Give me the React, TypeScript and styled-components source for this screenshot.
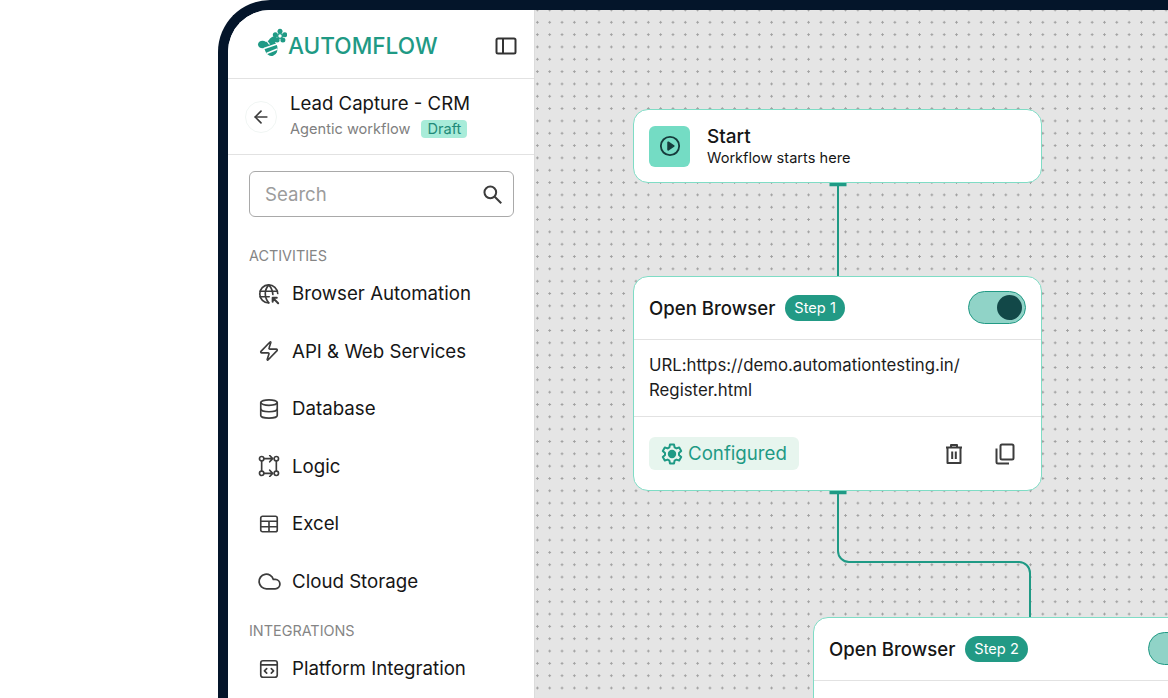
import { ReactNode } from "react"
import styled, { createGlobalStyle } from "styled-components"
import { ArrowLeft, Cloud, Database, Zap } from "lucide-react"

const GlobalStyle = createGlobalStyle`
  html, body {
    margin: 0;
    padding: 0;
    background: #fff;
    overflow: hidden;
  }
  * { box-sizing: border-box; }
  body {
    font-family: Inter, "Noto Sans", sans-serif;
    font-optical-sizing: none;
    color: #161616;
  }
`

const Page = styled.div`
  width: 1168px;
  height: 698px;
  padding-left: 218px;
  overflow: hidden;
`

const Frame = styled.div`
  display: flex;
  width: 950px;
  height: 698px;
  border-top: 10px solid #04152a;
  border-left: 10px solid #04152a;
  border-top-left-radius: 52px;
  overflow: hidden;
  background: #fff;
`

const Sidebar = styled.aside`
  flex: 0 0 307px;
  display: flex;
  flex-direction: column;
  border-right: 1px solid #dcdcdc;
  background: #fff;
`

const Brand = styled.div`
  display: flex;
  align-items: center;
  justify-content: space-between;
  height: 69px;
  padding: 3px 17px 0 29px;
  border-bottom: 1.5px solid #e2e2e2;
`

const Logo = styled.div`
  display: flex;
  align-items: center;
  gap: 1px;
  color: #1f9a85;
  font-size: 22.6px;
  font-weight: 500;
  svg { margin-top: -5px; }
`

const FlowHead = styled.div`
  display: flex;
  align-items: center;
  gap: 13px;
  height: 76px;
  padding: 0 0 4px 17px;
  border-bottom: 1.5px solid #e2e2e2;
`

const BackButton = styled.div`
  width: 32px;
  height: 32px;
  margin-top: 4px;
  display: flex;
  align-items: center;
  justify-content: center;
  border: 1px solid #f0f5f3;
  border-radius: 50%;
  color: #3c3c3c;
`

const FlowTitle = styled.div`
  font-size: 18.6px;
  line-height: 24px;
`

const FlowMeta = styled.div`
  display: flex;
  align-items: center;
  gap: 11px;
  margin-top: 5px;
  font-size: 14.6px;
  color: #808080;
`

const Draft = styled.span`
  padding: 0 6px;
  height: 18px;
  line-height: 18px;
  border-radius: 4px;
  background: #a8ecd9;
  color: #1f8a78;
  font-size: 14.6px;
`

const SearchBox = styled.div`
  display: flex;
  align-items: center;
  justify-content: space-between;
  height: 46px;
  margin: 16px 20px 0 21px;
  padding: 0 10px 0 15px;
  border: 1px solid #a9a9a9;
  border-radius: 6px;
  font-size: 18.6px;
  color: #9c9c9c;
  svg { color: #3c3c3c; }
`

const SectionLabel = styled.div<{ $top: number }>`
  margin: ${(p) => p.$top}px 0 0 21px;
  height: 18px;
  line-height: 18px;
  font-size: 14.4px;
  color: #858585;
`

const MenuList = styled.div`
  display: flex;
  flex-direction: column;
  gap: 33.6px;
  margin: 16.5px 0 0 30px;
`

const MenuItem = styled.div`
  display: flex;
  align-items: center;
  gap: 12px;
  height: 24px;
  font-size: 18.7px;
  svg { flex: 0 0 22px; color: #3c3c3c; }
`

const CloudGlyph = styled(Cloud)`
  && {
    flex: 0 0 25px;
    margin: 0 -1.5px;
  }
`

const Canvas = styled.main`
  position: relative;
  flex: 1;
  overflow: hidden;
  background-color: #e5e5e5;
  background-image: radial-gradient(circle, #a0a0a0 1px, transparent 1.3px);
  background-size: 12.33px 12.33px;
  background-position: -3.8px -6.2px;
`

const Wires = styled.svg`
  position: absolute;
  inset: 0;
  width: 100%;
  height: 100%;
`

const Node = styled.section<{ $x: number; $y: number; $h: number }>`
  position: absolute;
  left: ${(p) => p.$x}px;
  top: ${(p) => p.$y}px;
  width: 409px;
  height: ${(p) => p.$h}px;
  display: flex;
  flex-direction: column;
  background: #fff;
  border: 1.4px solid #7fdcc5;
  border-radius: 15px;
`

const StartBody = styled.div`
  display: flex;
  align-items: center;
  gap: 17px;
  height: 100%;
  padding: 0 0 0 15px;
`

const PlayTile = styled.div`
  width: 41px;
  height: 41px;
  display: flex;
  align-items: center;
  justify-content: center;
  border-radius: 6px;
  background: #74dcc4;
  color: #163c3c;
`

const StartTitle = styled.div`
  font-size: 19px;
  line-height: 23px;
  font-weight: 500;
`

const StartSub = styled.div`
  margin-top: 1px;
  font-size: 14.6px;
  line-height: 19px;
`

const NodeHead = styled.div`
  display: flex;
  align-items: center;
  gap: 10px;
  flex: 0 0 63px;
  padding: 0 15px 1px;
  border-bottom: 1.5px solid #e2e2e2;
`

const NodeTitle = styled.div`
  font-size: 18.6px;
  font-weight: 500;
`

const StepTag = styled.span`
  height: 26px;
  line-height: 26px;
  padding: 0 9px;
  border-radius: 13px;
  background: #229a85;
  color: #fff;
  font-size: 14.6px;
`

const Toggle = styled.div`
  margin-left: auto;
  width: 58px;
  height: 33px;
  display: flex;
  align-items: center;
  justify-content: flex-end;
  padding-right: 3px;
  border: 1px solid #229a85;
  border-radius: 17px;
  background: #90d3c7;
`

const Knob = styled.div`
  width: 25px;
  height: 25px;
  border-radius: 50%;
  background: #124848;
`

const NodeBody = styled.div`
  flex: 0 0 77px;
  padding: 13px 15px 0;
  font-size: 16.8px;
  line-height: 25px;
  color: #1c1c1c;
  border-bottom: 1.5px solid #e2e2e2;
`

const NodeFoot = styled.div`
  display: flex;
  align-items: center;
  flex: 1;
  padding: 0 26px 0 11px;
`

const Configured = styled.div`
  display: flex;
  align-items: center;
  gap: 4px;
  height: 33px;
  margin-left: 4px;
  padding: 0 12px 0 11px;
  border-radius: 6px;
  background: #e7f5ee;
  color: #1f9a85;
  font-size: 18.7px;
`

const FootActions = styled.div`
  display: flex;
  align-items: center;
  gap: 31px;
  margin-left: auto;
  color: #3c3c3c;
`

const PanelIcon = () => (
  <svg width="22" height="18" viewBox="0 0 22 18" fill="none" stroke="#333" strokeWidth="2">
    <rect x="1.500" y="1.500" width="19" height="15" rx="1.500" />
    <path d="M8 1.500v15" />
  </svg>
)

const SearchIcon = () => (
  <svg width="21" height="21" viewBox="0 0 24 24" fill="none" stroke="currentColor" strokeWidth="2.300">
    <circle cx="9.500" cy="9.500" r="6.700" />
    <path d="M14.500 14.500l7.500 7.500" />
  </svg>
)

const BrowserIcon = () => (
  <svg width="22" height="22" viewBox="0 0 24 24" fill="none" stroke="currentColor" strokeWidth="1.800" strokeLinecap="round" strokeLinejoin="round">
    <path d="M21.500 11.500a9.800 9.800 0 1 0-9.800 10.200" />
    <path d="M2.200 9h19M2.200 15h10" />
    <path d="M11.700 2c-5 5.600-5 13.800 0 19.600M11.700 2c2.900 3.200 4.300 6.700 4.500 10.500" />
    <path d="M16.500 16.500l5.500 5.500M16 20.500v-4.500h4.500" strokeWidth="2.200" />
  </svg>
)

const LogicIcon = () => (
  <svg width="22" height="22" viewBox="0 0 24 24" fill="none" stroke="currentColor" strokeWidth="1.800" strokeLinecap="round" strokeLinejoin="round">
    <circle cx="4" cy="4" r="2.400" />
    <circle cx="20" cy="4" r="2.400" />
    <circle cx="4" cy="20" r="2.400" />
    <circle cx="20" cy="20" r="2.400" />
    <path d="M4 6.500v11M20 6.500v11M6.500 4h9.500M12.800 .6L16 4l-3.200 3.400M6.500 20h9.500M12.800 16.600L16 20l-3.200 3.400" />
  </svg>
)

const ExcelIcon = () => (
  <svg width="22" height="22" viewBox="0 0 24 24" fill="none" stroke="currentColor" strokeWidth="1.800" strokeLinejoin="round">
    <rect x="3" y="3.500" width="18" height="17" rx="2" />
    <path d="M3 9h18M3 15h18M12 9v11.500" />
  </svg>
)

const PlatformIcon = () => (
  <svg width="22" height="22" viewBox="0 0 24 24" fill="none" stroke="currentColor" strokeWidth="1.800" strokeLinecap="round" strokeLinejoin="round">
    <rect x="3" y="3" width="18" height="18" rx="2.500" />
    <path d="M3 7.500h18M9.500 11.500L7 14l2.500 2.500M14.500 11.500L17 14l-2.500 2.500" />
  </svg>
)

const PlayIcon = () => (
  <svg width="22" height="22" viewBox="0 0 24 24" fill="none" stroke="currentColor" strokeWidth="2">
    <circle cx="12" cy="12" r="10" />
    <path d="M10 8l6 4-6 4z" fill="currentColor" stroke="currentColor" strokeLinejoin="round" />
  </svg>
)

const GearIcon = () => (
  <svg width="24" height="24" viewBox="0 0 24 24" fill="none" stroke="currentColor" strokeWidth="2" strokeLinejoin="round">
    <path d="M10 2.500h4l.6 2.900 1.800 1 2.800-.9 2 3.500-2.200 2v2l2.200 2-2 3.500-2.800-.9-1.800 1-.6 2.900h-4l-.6-2.900-1.800-1-2.800.9-2-3.500 2.200-2v-2l-2.200-2 2-3.500 2.800.9 1.800-1z" />
    <circle cx="12" cy="12" r="3.200" fill="currentColor" />
  </svg>
)

const TrashIcon = () => (
  <svg width="20" height="22" viewBox="0 0 20 22" fill="none" stroke="currentColor" strokeWidth="2" strokeLinejoin="round">
    <path d="M2 4.500h16M7 4.500V2h6v2.500" />
    <path d="M3.500 4.500V20h13V4.500" />
    <path d="M8.200 8.500v7.500M11.800 8.500v7.500" />
  </svg>
)

const CopyIcon = () => (
  <svg width="20" height="22" viewBox="0 0 20 22" fill="none" stroke="currentColor" strokeWidth="2" strokeLinejoin="round">
    <rect x="5.500" y="1.500" width="13" height="15" rx="1.500" />
    <path d="M1.500 5.500V19a1.500 1.500 0 0 0 1.500 1.500h11" />
  </svg>
)

const BeeLogo = () => (
  <svg width="30" height="30" viewBox="0 0 30 30" fill="#1f9a85">
    <ellipse cx="5.500" cy="16.500" rx="4.500" ry="3.800" />
    <ellipse cx="14" cy="20" rx="6.500" ry="8" transform="rotate(-15 14 20)" />
    <ellipse cx="16" cy="12" rx="4.500" ry="3" transform="rotate(-35 16 12)" />
    <path d="M7 20.500l13-4.500M9.500 25.500l11-4.500" stroke="#fff" strokeWidth="1.600" />
    <path d="M9.500 12.500l3 4" stroke="#fff" strokeWidth="1.200" />
    <circle cx="23" cy="3.300" r="2.500" />
    <circle cx="27.700" cy="6.700" r="2.500" />
    <circle cx="25.900" cy="12" r="2.500" />
    <circle cx="20.100" cy="12" r="2.500" />
    <circle cx="18.300" cy="6.700" r="2.500" />
    <circle cx="23" cy="8" r="3" />
    <circle cx="23" cy="8" r="1.700" fill="#fff" />
  </svg>
)

const menu: { icon: ReactNode; label: string }[] = [
  { icon: <BrowserIcon />, label: "Browser Automation" },
  { icon: <Zap size={22} strokeWidth={1.8} />, label: "API & Web Services" },
  { icon: <Database size={22} strokeWidth={1.8} />, label: "Database" },
  { icon: <LogicIcon />, label: "Logic" },
  { icon: <ExcelIcon />, label: "Excel" },
  { icon: <CloudGlyph size={25} strokeWidth={1.7} />, label: "Cloud Storage" }
]

const StepHead = ({ step }: { step: number }) => (
  <NodeHead>
    <NodeTitle>Open Browser</NodeTitle>
    <StepTag>Step {step}</StepTag>
    <Toggle>
      <Knob />
    </Toggle>
  </NodeHead>
)

export default function App() {
  return (
    <Page>
      <GlobalStyle />
      <Frame>
        <Sidebar>
          <Brand>
            <Logo>
              <BeeLogo />
              AUTOMFLOW
            </Logo>
            <PanelIcon />
          </Brand>
          <FlowHead>
            <BackButton>
              <ArrowLeft size={20} strokeWidth={2} />
            </BackButton>
            <div>
              <FlowTitle>Lead Capture - CRM</FlowTitle>
              <FlowMeta>
                Agentic workflow
                <Draft>Draft</Draft>
              </FlowMeta>
            </div>
          </FlowHead>
          <SearchBox>
            Search
            <SearchIcon />
          </SearchBox>
          <SectionLabel $top={30}>ACTIVITIES</SectionLabel>
          <MenuList>
            {menu.map((m) => (
              <MenuItem key={m.label}>
                {m.icon}
                {m.label}
              </MenuItem>
            ))}
          </MenuList>
          <SectionLabel $top={29}>INTEGRATIONS</SectionLabel>
          <MenuList>
            <MenuItem>
              <PlatformIcon />
              Platform Integration
            </MenuItem>
          </MenuList>
        </Sidebar>
        <Canvas>
          <Wires viewBox="0 0 633 688" fill="none">
            <path d="M303 172v96" stroke="#1f9a85" strokeWidth="2" />
            <path d="M303 480v61a11 11 0 0 0 11 11h170a11 11 0 0 1 11 11v46" stroke="#1f9a85" strokeWidth="2" />
            <path d="M294.500 174.500h17M294.500 482.500h17" stroke="#1f9a85" strokeWidth="3.500" />
          </Wires>
          <Node $x={98} $y={99} $h={74}>
            <StartBody>
              <PlayTile>
                <PlayIcon />
              </PlayTile>
              <div>
                <StartTitle>Start</StartTitle>
                <StartSub>Workflow starts here</StartSub>
              </div>
            </StartBody>
          </Node>
          <Node $x={98} $y={266} $h={215}>
            <StepHead step={1} />
            <NodeBody>
              URL:https://demo.automationtesting.in/
              <br />
              Register.html
            </NodeBody>
            <NodeFoot>
              <Configured>
                <GearIcon />
                Configured
              </Configured>
              <FootActions>
                <TrashIcon />
                <CopyIcon />
              </FootActions>
            </NodeFoot>
          </Node>
          <Node $x={278} $y={607} $h={215}>
            <StepHead step={2} />
          </Node>
        </Canvas>
      </Frame>
    </Page>
  )
}
